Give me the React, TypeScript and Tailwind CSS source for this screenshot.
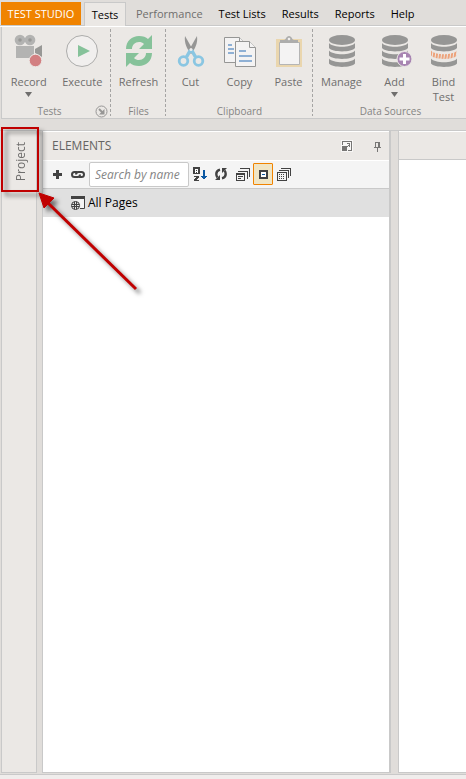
import type { ReactNode } from "react";

function RecordIcon() {
  return (
    <svg width="32" height="36" viewBox="0 0 32 36" aria-hidden="true">
      <g fill="#b3b3b2">
        <circle cx="7" cy="7" r="5.300" />
        <circle cx="17" cy="7" r="5.300" />
        <path d="M3 13h18v12H3z" />
      </g>
      <circle cx="7" cy="7" r="1.800" fill="#989896" />
      <circle cx="17" cy="7" r="1.800" fill="#989896" />
      <path d="M29 12v12l-7-4v-4z" fill="#989896" />
      <circle cx="22.500" cy="27.500" r="6.300" fill="#d27f81" stroke="#ebe8e5" />
    </svg>
  );
}

function ExecuteIcon() {
  return (
    <svg width="34" height="36" viewBox="0 0 34 36" aria-hidden="true">
      <circle cx="17" cy="18" r="15.500" fill="#f1efee" stroke="#acacab" />
      <path d="M13 12v12l12-6z" fill="#86c29a" />
    </svg>
  );
}

function RefreshIcon() {
  return (
    <svg width="28" height="36" viewBox="0 0 28 36" fill="#86c29a" aria-hidden="true">
      <path d="M1 16C1 8 7 3 14 3c4 0 7 1 9 3l4-4v14H14l5-5c-1.500-1.500-3-2-5-2-4 0-7 3-7 7z" />
      <path d="M27 20c0 8-6 13-13 13-4 0-7-1-9-3l-4 4V20h13l-5 5c1.500 1.500 3 2 5 2 4 0 7-3 7-7z" />
    </svg>
  );
}

function CutIcon() {
  return (
    <svg width="28" height="36" viewBox="0 0 28 36" fill="none" aria-hidden="true">
      <path d="M8 3l8 14-2 4C10 16 7 10 8 3z" fill="#969695" />
      <path d="M20 3l-8 14 2 4c4-5 7-11 6-18z" fill="#969695" />
      <path d="M13.500 17l-4 7M14.500 17l4 7" stroke="#8ac6e2" strokeWidth="3.500" />
      <circle cx="6.500" cy="28" r="4.300" stroke="#8ac6e2" strokeWidth="2.800" />
      <circle cx="21.500" cy="28" r="4.300" stroke="#8ac6e2" strokeWidth="2.800" />
      <circle cx="14" cy="16.500" r="1.500" fill="#efedec" />
    </svg>
  );
}

function CopyIcon() {
  return (
    <svg width="34" height="36" viewBox="0 0 34 36" fill="#f4f3f3" stroke="#969695" aria-hidden="true">
      <path d="M1.500 4.500h15l5 5v20h-20z" />
      <path d="M16.500 4.500v5h5" />
      <path d="M5 12h4M5 16h6M5 20h6" stroke="#8fb0d4" strokeWidth="2" />
      <path d="M12.500 8.500h14l6 6v19h-20z" />
      <path d="M26.500 8.500v6h6" />
      <path d="M16 18h7M16 23h13M16 28h13" stroke="#8fb0d4" strokeWidth="2" />
    </svg>
  );
}

function PasteIcon() {
  return (
    <svg width="28" height="36" viewBox="0 0 28 36" aria-hidden="true">
      <path d="M1 6h26v28H1z" fill="#ead6ae" />
      <path d="M4.500 9.500h20v22h-20z" fill="#f4f3f3" stroke="#b5b5b5" />
      <path d="M5 10V7h4c2 0 2-4 5-4s3 4 5 4h4v3z" fill="#adadac" />
      <circle cx="14" cy="6" r="1.300" fill="#efedec" />
    </svg>
  );
}

function DatabaseIcon({ kind = "plain" }: { kind?: "plain" | "add" | "bind" }) {
  return (
    <svg width="34" height="36" viewBox="0 0 34 36" fill="#969695" aria-hidden="true">
      <defs>
        <pattern id="bind-stripes" width="3" height="10" patternUnits="userSpaceOnUse" patternTransform="skewX(-8)">
          <path d="M0 0h2v10H0z" fill="#eda27a" />
        </pattern>
      </defs>
      <ellipse cx="17" cy="7" rx="13" ry="5" />
      <path d="M4 10c4 5 22 5 26 0v5c-3 4.500-23 4.500-26 0z" />
      <path d="M4 17.500c4 5 22 5 26 0v5c-3 4.500-23 4.500-26 0z" fill={kind === "bind" ? "url(#bind-stripes)" : "#969695"} />
      <path d="M4 25.500c4 5 22 5 26 0v5c-3 4.500-23 4.500-26 0z" />
      {kind === "add" && (
        <g>
          <circle cx="26.500" cy="26" r="7.500" fill="#a885b2" stroke="#ebe8e5" />
          <path d="M25 21h3v3.500h3.500v3H28V31h-3v-3.500h-3.500v-3H25z" fill="#fff" />
        </g>
      )}
    </svg>
  );
}

function RibbonButton({ icon, label, width, menu }: { icon: ReactNode; label: string; width: string; menu?: boolean }) {
  return (
    <button type="button" className={`flex flex-col items-center ${width}`}>
      {icon}
      <span className="mt-[5px] text-center text-[11px] leading-[15px]">{label}</span>
      {menu && (
        <svg width="7" height="5" viewBox="0 0 7 5" className="mt-[3px]" fill="#6f6e6d" aria-hidden="true">
          <path d="M0 0h7L3.500 5z" />
        </svg>
      )}
    </button>
  );
}

function RibbonGroup({ title, width, divided = true, corner, children }: { title: string; width: string; divided?: boolean; corner?: ReactNode; children: ReactNode }) {
  return (
    <section aria-label={title} className={`relative flex shrink-0 flex-col justify-between ${width}`}>
      <div className="flex items-start justify-center pt-[6px]">{children}</div>
      <h2 className="text-center text-[10px] leading-[14px] text-[#858483]">{title}</h2>
      {corner}
      {divided && (
        <svg className="absolute right-0 top-[2px]" width="1" height="87" aria-hidden="true">
          <path d="M.5 0v87" stroke="#a5a4a3" strokeDasharray="3 2" />
        </svg>
      )}
    </section>
  );
}

function Ribbon() {
  return (
    <div className="ml-px flex h-[92px] overflow-hidden border-b border-l border-[#c9c9c9] bg-[#ebe8e5] text-[#6f6e6d]">
      <RibbonGroup
        title="Tests"
        width="w-[109px] pr-[14px]"
        corner={
          <button type="button" aria-label="Tests options" className="absolute bottom-0 right-[3px]">
            <svg width="13" height="13" viewBox="0 0 13 13" fill="none" stroke="#979695">
              <circle cx="6.500" cy="6.500" r="5.500" />
              <path d="M4 4l4 4" strokeWidth="2" />
              <path d="M9.500 4v5.500H4L9.500 4z" fill="#979695" stroke="none" />
            </svg>
          </button>
        }
      >
        <RibbonButton icon={<RecordIcon />} label="Record" width="w-[54px]" menu />
        <RibbonButton icon={<ExecuteIcon />} label="Execute" width="-mr-3 w-[54px]" />
      </RibbonGroup>
      <RibbonGroup title="Files" width="w-[55px]">
        <RibbonButton icon={<RefreshIcon />} label="Refresh" width="w-[54px]" />
      </RibbonGroup>
      <RibbonGroup title="Clipboard" width="w-[147px]">
        <RibbonButton icon={<CutIcon />} label="Cut" width="w-[49px]" />
        <RibbonButton icon={<CopyIcon />} label="Copy" width="w-[49px]" />
        <RibbonButton icon={<PasteIcon />} label="Paste" width="w-[49px]" />
      </RibbonGroup>
      <RibbonGroup title="Data Sources" width="w-[155px]" divided={false}>
        <RibbonButton icon={<DatabaseIcon />} label="Manage" width="w-[54px]" />
        <RibbonButton icon={<DatabaseIcon kind="add" />} label="Add" width="w-[52px]" menu />
        <RibbonButton icon={<DatabaseIcon kind="bind" />} label="Bind Test" width="w-[46px] px-[6px]" />
      </RibbonGroup>
    </div>
  );
}

const tabs = ["Performance", "Test Lists", "Results", "Reports", "Help"];

function TabBar() {
  return (
    <nav aria-label="Ribbon tabs" className="flex h-[27px] items-end overflow-hidden whitespace-nowrap border-b border-white pl-px text-[11px] leading-[22px] text-black shadow-[inset_0_-1px_#c9c9c9]">
      <button type="button" className="mb-px h-[23px] w-[80px] shrink-0 bg-[#f08300] text-white">TEST STUDIO</button>
      <button type="button" aria-current="page" className="-mb-px ml-[3px] mr-[2px] h-[25px] w-[42px] shrink-0 border border-b-0 border-[#c9c9c9] bg-[#ebe8e5]">Tests</button>
      {tabs.map((tab) => (
        <button key={tab} type="button" className={`mb-px h-[23px] shrink-0 px-2 ${tab === "Performance" ? "text-[#6f6e6d]" : ""}`}>
          {tab}
        </button>
      ))}
    </nav>
  );
}

function PanelHeader() {
  return (
    <header className="flex h-[30px] items-center border-b border-t border-white bg-[#ebe8e5] pl-[9px] pr-[7px] text-[#656463]">
      <h1 className="flex-1 text-[12px] leading-[18px]">ELEMENTS</h1>
      <button type="button" aria-label="Expand panel" className="mr-5 bg-[#f8f7f6] p-px">
        <svg width="10" height="10" viewBox="0 0 10 10" fill="none" stroke="#777675" shapeRendering="crispEdges">
          <path d="M.5 4V.5h9v9H6M5 2.500h3M7.500 2v4" />
          <path d="M5 5h1V4h1V3h1v1H7v1H6v1H5zM0 5h5v5H0z" fill="#777675" stroke="none" />
        </svg>
      </button>
      <button type="button" aria-label="Pin panel">
        <svg width="9" height="11" viewBox="0 0 9 11" fill="none" stroke="#777675" shapeRendering="crispEdges">
          <path d="M2.500 6V1.500h4V6M5.500 1v5M1 6.500h7M4.500 7v4" />
        </svg>
      </button>
    </header>
  );
}

function Toolbar() {
  return (
    <div className="flex h-[28px] items-center border-b border-[#c9c9c9] bg-[#f4f4f4] pb-px pl-[10px]">
      <button type="button" aria-label="Add element">
        <svg width="9" height="9" viewBox="0 0 9 9" fill="#424242"><path d="M3 0h3v3h3v3H6v3H3V6H0V3h3z" /></svg>
      </button>
      <button type="button" aria-label="Link element" className="ml-[9px]">
        <svg width="14" height="9" viewBox="0 0 14 9" fill="none" stroke="#424242" strokeWidth="2">
          <path d="M9 4.500Q9 7 6.500 7h-3Q1 7 1 4.500T3.500 2h3" />
          <path d="M5 4.500Q5 2 7.500 2h3Q13 2 13 4.500T10.500 7h-3" />
        </svg>
      </button>
      <input
        type="text"
        aria-label="Search by name"
        placeholder="Search by name"
        className="ml-1 h-[25px] w-[100px] rounded-[2px] border border-[#c9c9c9] bg-white px-[5px] text-[12px] italic leading-[18px] outline-none placeholder:text-[#858585]"
      />
      <button type="button" aria-label="Sort alphabetically" className="ml-1">
        <svg width="14" height="14" viewBox="0 0 14 14" fill="none" shapeRendering="crispEdges">
          <path d="M0 0h7v7H0z" fill="#424242" />
          <path d="M2.500 6V2.500h2V6M2 4.500h3" stroke="#fff" />
          <path d="M1 9h5v2H5v1H4v1h2v1H1v-2h1v-1h1v-1H1z" fill="#424242" />
          <path d="M10 3h2v6h2v1h-1v1h-1v1h-2v-1H9v-1H8V9h2z" fill="#0b58a2" />
        </svg>
      </button>
      <button type="button" aria-label="Refresh elements" className="ml-[8px]">
        <svg width="12" height="12" viewBox="0 0 12 12" fill="none" stroke="#424242" strokeWidth="2.400">
          <path d="M5 1.600Q1.300 2.500 1.300 6q0 2 1.200 3.500M7 10.400Q10.700 9.500 10.700 6q0-2-1.200-3.500" />
          <path d="M5 7v5H0zM7 5V0h5z" fill="#424242" stroke="none" />
        </svg>
      </button>
      <button type="button" aria-label="Show windows" className="ml-[9px]">
        <svg width="14" height="13" viewBox="0 0 14 13" fill="none" stroke="#424242" shapeRendering="crispEdges">
          <path d="M4 .5h9.500V9M2 3h9.500v8" />
          <path d="M.5 5.500h8v7h-8zM0 6h9M2 8.500h5M2 10.500h3" />
        </svg>
      </button>
      <button type="button" aria-label="Collapse all" aria-pressed="true" className="ml-[3px] flex h-[22px] w-[20px] items-center justify-center rounded-[1px] border border-[#f08300] bg-[#f0e5c5]">
        <svg width="9" height="9" viewBox="0 0 9 9" shapeRendering="crispEdges">
          <path d="M1 1h7v7H1z" fill="#fff" stroke="#424242" strokeWidth="2" />
          <path d="M3 4h3v1H3z" fill="#0b58a2" />
        </svg>
      </button>
      <button type="button" aria-label="Show grids" className="ml-1">
        <svg width="14" height="13" viewBox="0 0 14 13" fill="none" stroke="#424242" shapeRendering="crispEdges">
          <path d="M4 .5h9.500V8M2 2.500h9.500V10M.5 4.500h9v8h-9z" />
          <path d="M2 6.500h6M2 8.500h6M2 10.500h6" strokeDasharray="1 1" />
        </svg>
      </button>
    </div>
  );
}

function PageIcon() {
  return (
    <svg width="14" height="14" viewBox="0 0 14 14" fill="none" stroke="#424242" aria-hidden="true">
      <path d="M.5 1h13v11.500H9" fill="#f4f4f4" />
      <path d="M0 0h14v3H0z" fill="#424242" stroke="none" />
      <circle cx="4.500" cy="9.500" r="5" fill="#e0e0e0" stroke="none" />
      <circle cx="4.500" cy="9.500" r="4" />
      <path d="M.5 8.500h8M.5 10.500h8M3.500 5.500v8M5.500 5.500v8" />
    </svg>
  );
}

function Callout() {
  return (
    <svg className="pointer-events-none absolute left-0 top-[120px] overflow-visible drop-shadow-[4px_4px_2px_rgba(0,0,0,0.5)]" width="145" height="180" aria-hidden="true">
      <path d="M2 8h36v63H2z" fill="none" stroke="#c00000" strokeWidth="2" />
      <path d="M136 169L48 83" stroke="#c00000" strokeWidth="3" />
      <path d="M39 73l15 5-10 10z" fill="#c00000" stroke="#c00000" />
    </svg>
  );
}

export default function App() {
  return (
    <div className="relative flex min-h-screen flex-col overflow-hidden bg-[#e0ddda] font-['Open_Sans','Noto_Sans',sans-serif]">
      <TabBar />
      <Ribbon />
      <main className="mt-[11px] flex flex-1 border-t border-[#c9c9c9]">
        <aside className="mb-px ml-px w-[36px] shrink-0 border-x border-b border-[#c9c9c9] bg-[#ebe8e5]">
          <button type="button" className="flex h-[62px] w-full items-center justify-center pl-[3px] text-[12px] leading-[16px] text-[#6f6e6d]">
            <span className="rotate-180 [writing-mode:vertical-rl]">Project</span>
          </button>
        </aside>
        <section aria-label="Elements" className="mb-px ml-[5px] flex w-[349px] shrink-0 flex-col border-b border-l border-r-2 border-[#c9c9c9] bg-white">
          <PanelHeader />
          <Toolbar />
          <ul>
            <li>
              <button type="button" className="flex h-[28px] w-full items-center bg-[#e0e0e0] pl-[28px] text-[12px] leading-[18px] text-black">
                <PageIcon />
                <span className="ml-[3px]">All Pages</span>
              </button>
            </li>
          </ul>
        </section>
        <section aria-label="Document" className="mb-px ml-[7px] min-w-0 flex-1 border-b border-l border-[#c9c9c9] bg-white">
          <div className="h-[29px] border-b border-t border-b-[#c9c9c9] border-t-white bg-[#ebe8e5]" />
        </section>
      </main>
      <footer className="h-[5px] border-t border-[#c9c9c9] bg-[#f0edec]" />
      <Callout />
    </div>
  );
}
